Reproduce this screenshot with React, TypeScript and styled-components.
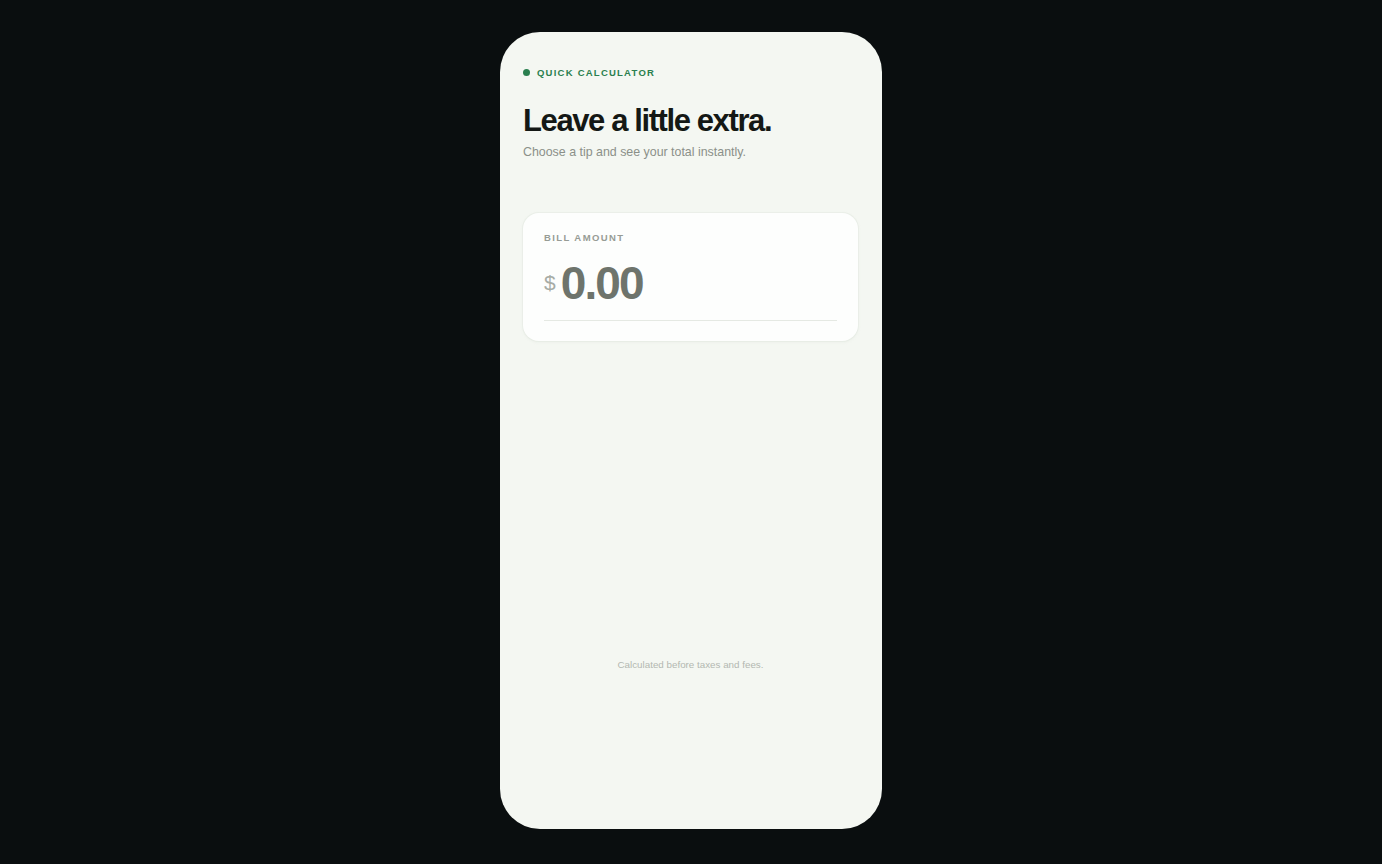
import React from "react";
import styled, { createGlobalStyle } from "styled-components";

const GlobalStyle = createGlobalStyle`
  html, body {
    margin: 0;
    padding: 0;
    background: #0a0e0f;
  }
  body {
    font-family: "Liberation Sans", Arial, sans-serif;
    -webkit-font-smoothing: antialiased;
  }
`;

const Stage = styled.div`
  min-height: 864px;
  display: flex;
  justify-content: center;
  padding-top: 32px;
  box-sizing: border-box;
`;

const Phone = styled.div`
  width: 382px;
  height: 797px;
  background: #f4f7f2;
  border-radius: 40px;
  box-sizing: border-box;
  padding: 35px 24px 0 23px;
  display: flex;
  flex-direction: column;
`;

const Eyebrow = styled.div`
  display: flex;
  align-items: center;
  gap: 7px;
  font-size: 9.5px;
  font-weight: 700;
  letter-spacing: 0.13em;
  color: #2a7f4f;
  text-transform: uppercase;
`;

const Dot = styled.span`
  width: 7px;
  height: 7px;
  border-radius: 50%;
  background: #2a7f4f;
`;

const Title = styled.h1`
  margin: 25px 0 0;
  font-size: 31px;
  font-weight: 700;
  letter-spacing: -0.045em;
  line-height: 36px;
  color: #141815;
`;

const Subtitle = styled.p`
  margin: 4px 0 0;
  font-size: 12.4px;
  line-height: 18px;
  color: #8b9089;
`;

const Card = styled.div`
  margin-top: 52px;
  background: #fdfefd;
  border-radius: 16px;
  box-shadow: 0 0 0 1px rgba(228, 234, 226, 0.5), 0 1px 3px rgba(200, 210, 198, 0.25);
  padding: 19px 21px 20px;
`;

const Label = styled.div`
  font-size: 9.5px;
  font-weight: 700;
  letter-spacing: 0.15em;
  color: #979c95;
  text-transform: uppercase;
`;

const AmountRow = styled.div`
  display: flex;
  align-items: center;
  gap: 5px;
  margin-top: 14px;
  padding-bottom: 11px;
  border-bottom: 1px solid #e5e9e3;
`;

const Currency = styled.span`
  font-size: 21px;
  color: #a7aca5;
`;

const Amount = styled.span`
  font-size: 46px;
  font-weight: 700;
  letter-spacing: -0.04em;
  line-height: 52px;
  color: #6e746c;
`;

const Footnote = styled.div`
  margin-top: 318px;
  text-align: center;
  font-size: 9.8px;
  color: #b3b8b1;
`;

export default function App() {
  return (
    <>
      <GlobalStyle />
      <Stage>
        <Phone>
          <Eyebrow>
            <Dot />
            Quick Calculator
          </Eyebrow>
          <Title>Leave a little extra.</Title>
          <Subtitle>Choose a tip and see your total instantly.</Subtitle>
          <Card>
            <Label>Bill Amount</Label>
            <AmountRow>
              <Currency>$</Currency>
              <Amount>0.00</Amount>
            </AmountRow>
          </Card>
          <Footnote>Calculated before taxes and fees.</Footnote>
        </Phone>
      </Stage>
    </>
  );
}
